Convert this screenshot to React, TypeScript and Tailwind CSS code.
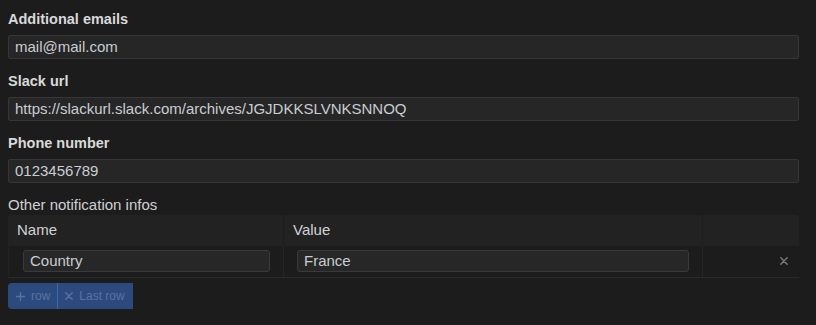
import React from "react";

function Field({ label, value }: { label: string; value: string }) {
  return (
    <div className="flex flex-col mb-[12px]">
      <div className="h-5 leading-5 text-[14.5px] font-bold text-[#d8d9da]">{label}</div>
      <div className="mt-[6px] h-[24px] flex items-center bg-[#262626] border border-[#363636] rounded-[2px] pl-[6px] text-[15px] text-[#c9cdd2]">
        {value}
      </div>
    </div>
  );
}

function XIcon({ className }: { className?: string }) {
  return (
    <svg viewBox="0 0 8 8" className={className} fill="none" stroke="currentColor" strokeWidth="1.4" strokeLinecap="round">
      <path d="M0.8 0.8 L7.2 7.2 M7.2 0.8 L0.8 7.2" />
    </svg>
  );
}

export default function App() {
  return (
    <div
      className="w-[816px] h-[325px] bg-[#1c1c1c] pl-2 pr-[17px] pt-[9px] overflow-hidden"
      style={{ fontFamily: '"Liberation Sans", Arial, sans-serif' }}
    >
      <Field label="Additional emails" value="mail@mail.com" />
      <Field label="Slack url" value="https://slackurl.slack.com/archives/JGJDKKSLVNKSNNOQ" />
      <Field label="Phone number" value="0123456789" />

      <div className="mt-[2px] h-5 leading-5 text-[15px] text-[#cfd0d2]">Other notification infos</div>

      <div className="w-full">
        <div className="flex h-[31px] bg-[#222222] rounded-t-[2px] text-[15px] text-[#d0d3d8]">
          <div className="w-[276px] flex items-center pl-[9px] border-r border-[#1c1c1c]">Name</div>
          <div className="w-[419px] flex items-center pl-[9px] border-r border-[#1c1c1c]">Value</div>
          <div className="flex-1" />
        </div>
        <div className="flex h-[32px] border-b border-[#2a2a2a]">
          <div className="w-[276px] pl-[14px] pr-[13px] pt-[4px] border-r border-[#262626] border-l border-l-[#222222]">
            <div className="h-[22px] flex items-center bg-[#272727] border border-[#3a3a3a] rounded-[3px] pl-[6px] text-[15px] text-[#c9cdd2]">
              Country
            </div>
          </div>
          <div className="w-[419px] pl-[13px] pr-[13px] pt-[4px] border-r border-[#262626]">
            <div className="h-[22px] flex items-center bg-[#272727] border border-[#3a3a3a] rounded-[3px] pl-[6px] text-[15px] text-[#c9cdd2]">
              France
            </div>
          </div>
          <div className="flex-1 flex items-center justify-end pr-[11px] pb-[2px]">
            <XIcon className="w-[8px] h-[8px] text-[#7b7b7b]" />
          </div>
        </div>
      </div>

      <div className="mt-[5px] flex h-[26px] w-fit text-[12px] text-[#5a72a0]">
        <div className="flex items-center gap-[6px] pl-[8px] pr-[7px] bg-[#2d4a7e] rounded-l-[4px]">
          <svg viewBox="0 0 9 9" className="w-[9px] h-[9px]" fill="none" stroke="currentColor" strokeWidth="1.3">
            <path d="M4.5 0 V9 M0 4.5 H9" />
          </svg>
          <span>row</span>
        </div>
        <div className="w-px bg-[#3b66b8]" />
        <div className="flex items-center gap-[6px] pl-[7px] pr-[8px] bg-[#2d4a7e]">
          <XIcon className="w-[8px] h-[8px]" />
          <span>Last row</span>
        </div>
      </div>
    </div>
  );
}
